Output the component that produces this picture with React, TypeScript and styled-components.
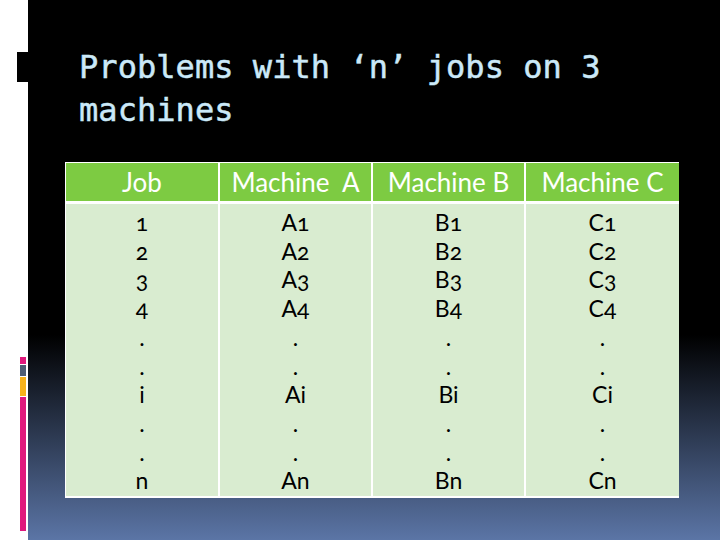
import React from "react";
import styled, { createGlobalStyle } from "styled-components";

const Global = createGlobalStyle`
  html, body { margin: 0; padding: 0; background: #ffffff; }
  #root { width: 720px; height: 540px; }
`;

const Slide = styled.div`
  width: 720px;
  height: 540px;
  display: flex;
  overflow: hidden;
`;

const Strip = styled.div`
  width: 28px;
  flex: none;
  background: #ffffff;
  display: flex;
  flex-direction: column;
  align-items: flex-end;
`;

const TopMark = styled.div`
  width: 11px;
  height: 30px;
  margin-top: 52px;
  background: #000000;
`;

const BarStack = styled.div`
  margin-top: 275px;
  margin-right: 2px;
  width: 6px;
  display: flex;
  flex-direction: column;
  gap: 1px;
`;

const Bar = styled.div<{ $c: string; $h: number }>`
  height: ${(p) => p.$h}px;
  background: ${(p) => p.$c};
`;

const Main = styled.div`
  flex: 1;
  background: linear-gradient(to bottom, #000000 0%, #000000 62%, #5b75a6 100%);
  display: flex;
  flex-direction: column;
`;

const Title = styled.h1`
  margin: 46px 0 0 51px;
  font-family: "DejaVu Sans Mono", "Liberation Mono", monospace;
  font-weight: normal;
  font-size: 32px;
  line-height: 43px;
  color: #cbe9f8;
  -webkit-text-stroke: 0.5px #cbe9f8;
  letter-spacing: 0.05px;
`;

const Table = styled.div`
  margin: 30px 0 0 37px;
  width: 614px;
  display: grid;
  grid-template-columns: 153px 151px 151px 153px;
  grid-template-rows: 38px 292px;
  column-gap: 2px;
  row-gap: 3px;
  background: #ffffff;
  padding: 1px 0 2px 0;
  box-sizing: border-box;
  font-family: "Lato", "Open Sans", sans-serif;
`;

const HeadCell = styled.div`
  background: #7dcb42;
  color: #ffffff;
  font-size: 26px;
  white-space: pre;
  display: flex;
  align-items: center;
  justify-content: center;
  &:first-child { margin-left: 1px; }
`;

const BodyCell = styled.div`
  background: #d9ecd0;
  color: #000000;
  font-size: 23px;
  line-height: 28.7px;
  padding-top: 4px;
  text-align: center;
  font-variant-numeric: oldstyle-nums;
  &:nth-child(5) { margin-left: 1px; }
`;

const Line = styled.div``;

const headers = ["Job", "Machine  A", "Machine B", "Machine C"];
const cols = [
  ["1", "2", "3", "4", ".", ".", "i", ".", ".", "n"],
  ["A1", "A2", "A3", "A4", ".", ".", "Ai", ".", ".", "An"],
  ["B1", "B2", "B3", "B4", ".", ".", "Bi", ".", ".", "Bn"],
  ["C1", "C2", "C3", "C4", ".", ".", "Ci", ".", ".", "Cn"],
];

export default function App() {
  return (
    <>
      <Global />
      <Slide>
        <Strip>
          <TopMark />
          <BarStack>
            <Bar $c="#e0197d" $h={7} />
            <Bar $c="#4e5d74" $h={11} />
            <Bar $c="#f7b21b" $h={19} />
            <Bar $c="#e0197d" $h={134} />
          </BarStack>
        </Strip>
        <Main>
          <Title>
            Problems with ‘n’ jobs on 3
            <br />
            machines
          </Title>
          <Table>
            {headers.map((h) => (
              <HeadCell key={h}>{h}</HeadCell>
            ))}
            {cols.map((c, i) => (
              <BodyCell key={i}>
                {c.map((t, j) => (
                  <Line key={j}>{t}</Line>
                ))}
              </BodyCell>
            ))}
          </Table>
        </Main>
      </Slide>
    </>
  );
}
